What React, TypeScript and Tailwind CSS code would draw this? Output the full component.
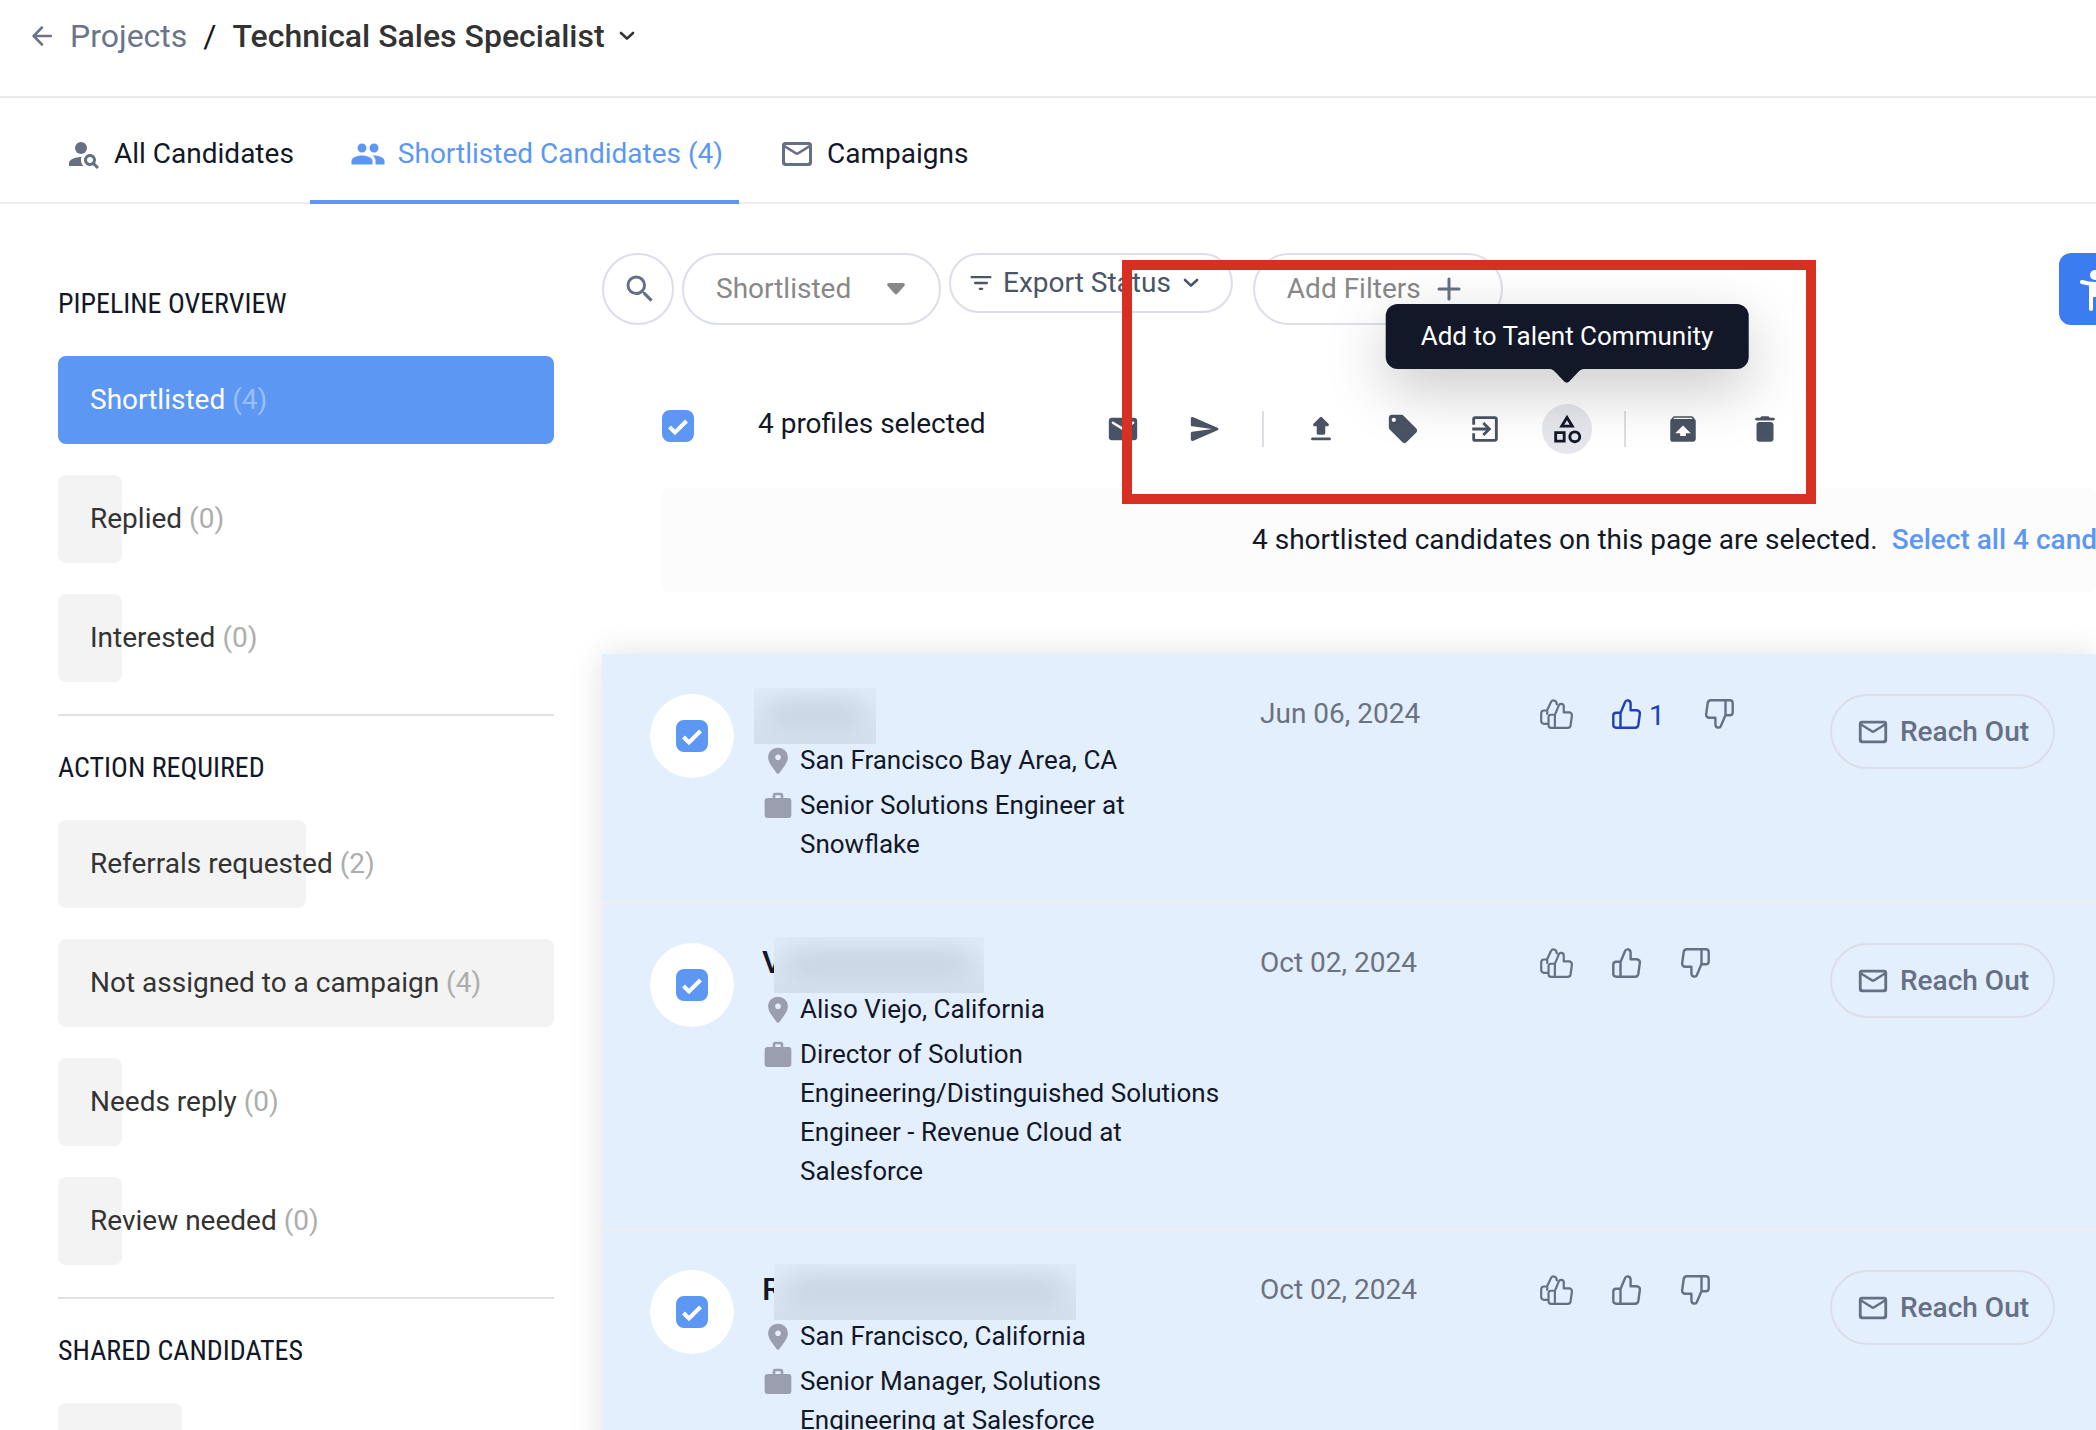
import { useState } from "react";
import type { ReactNode } from "react";
import {
  MdExitToApp,
  MdLocalOffer,
  MdOutlineCategory,
  MdPeople,
  MdPersonSearch,
  MdSearch,
  MdUnarchive,
} from "react-icons/md";

interface PipelineItem {
  label?: string;
  count: number;
  share: number;
}

interface PipelineSection {
  title: string;
  items: PipelineItem[];
}

interface Candidate {
  initial: string;
  maskClass: string;
  location: string;
  job: string;
  date: string;
  likes: number;
}

const sections: PipelineSection[] = [
  {
    title: "PIPELINE OVERVIEW",
    items: [
      { label: "Shortlisted", count: 4, share: 100 },
      { label: "Replied", count: 0, share: 0 },
      { label: "Interested", count: 0, share: 0 },
    ],
  },
  {
    title: "ACTION REQUIRED",
    items: [
      { label: "Referrals requested", count: 2, share: 50 },
      { label: "Not assigned to a campaign", count: 4, share: 100 },
      { label: "Needs reply", count: 0, share: 0 },
      { label: "Review needed", count: 0, share: 0 },
    ],
  },
  {
    title: "SHARED CANDIDATES",
    items: [{ count: 1, share: 25 }],
  },
];

const candidates: Candidate[] = [
  {
    initial: "",
    maskClass: "-left-2 w-[122px]",
    location: "San Francisco Bay Area, CA",
    job: "Senior Solutions Engineer at Snowflake",
    date: "Jun 06, 2024",
    likes: 1,
  },
  {
    initial: "V",
    maskClass: "left-3 w-[210px]",
    location: "Aliso Viejo, California",
    job: "Director of Solution Engineering/Distinguished Solutions Engineer - Revenue Cloud at Salesforce",
    date: "Oct 02, 2024",
    likes: 0,
  },
  {
    initial: "R",
    maskClass: "left-3 w-[302px]",
    location: "San Francisco, California",
    job: "Senior Manager, Solutions Engineering at Salesforce",
    date: "Oct 02, 2024",
    likes: 0,
  },
];

/* Icons */

const Icon = ({ d, className }: { d: string; className: string }) => (
  <svg viewBox="0 0 24 24" fill="currentColor" className={className} aria-hidden="true">
    <path d={d} />
  </svg>
);

const mailOutline =
  "M20 4H4c-1.1 0-2 .9-2 2v12c0 1.1.9 2 2 2h16c1.1 0 2-.9 2-2V6c0-1.1-.9-2-2-2zm-1 14H5c-.55 0-1-.45-1-1V8l6.94 4.34c.65.41 1.47.41 2.12 0L20 8v9c0 .55-.45 1-1 1zm-7-7L4 6h16l-8 5z";
const mail =
  "M20 4H4c-1.1 0-1.99.9-1.99 2L2 18c0 1.1.9 2 2 2h16c1.1 0 2-.9 2-2V6c0-1.1-.9-2-2-2zm-.4 4.25l-7.07 4.42c-.32.2-.74.2-1.06 0L4.4 8.25c-.25-.16-.4-.43-.4-.72 0-.67.73-1.07 1.3-.72L12 11l6.7-4.19c.57-.35 1.3.05 1.3.72 0 .29-.15.56-.4.72z";
const send =
  "M3.4 20.4l17.45-7.48c.81-.35.81-1.49 0-1.84L3.4 3.6c-.66-.29-1.39.2-1.39.91L2 9.12c0 .5.37.93.87.99L17 12 2.87 13.88c-.5.07-.87.5-.87 1l.01 4.61c0 .71.73 1.2 1.39.91z";
const upload =
  "M7.4 10h1.59v5c0 .55.45 1 1 1h4c.55 0 1-.45 1-1v-5h1.59c.89 0 1.34-1.08.71-1.71L12.7 3.7a.996.996 0 0 0-1.41 0L6.7 8.29c-.63.63-.19 1.71.7 1.71zM5 19c0 .55.45 1 1 1h12c.55 0 1-.45 1-1s-.45-1-1-1H6c-.55 0-1 .45-1 1z";
const trash =
  "M6 19c0 1.1.9 2 2 2h8c1.1 0 2-.9 2-2V9c0-1.1-.9-2-2-2H8c-1.1 0-2 .9-2 2v10zM18 4h-2.5l-.71-.71c-.18-.18-.44-.29-.7-.29H9.91c-.26 0-.52.11-.7.29L8.5 4H6c-.55 0-1 .45-1 1s.45 1 1 1h12c.55 0 1-.45 1-1s-.45-1-1-1z";
const place =
  "M12 2C7.8 2 4.6 5.2 4.6 9.2c0 4.5 4.1 8.3 6.3 11.8.5.8 1.7.8 2.2 0 2.2-3.5 6.3-7.3 6.3-11.8C19.4 5.2 16.2 2 12 2zm0 9.3a2.1 2.1 0 1 1 0-4.2 2.1 2.1 0 0 1 0 4.2z";
const briefcase =
  "M20 6h-4V4c0-1.11-.89-2-2-2h-4c-1.11 0-2 .89-2 2v2H4c-1.11 0-2 .89-2 2v11c0 1.11.89 2 2 2h16c1.11 0 2-.89 2-2V8c0-1.11-.89-2-2-2zm-6 0h-4V4h4v2z";
const filterList =
  "M11 18h2c.55 0 1-.45 1-1s-.45-1-1-1h-2c-.55 0-1 .45-1 1s.45 1 1 1zM3 7c0 .55.45 1 1 1h16c.55 0 1-.45 1-1s-.45-1-1-1H4c-.55 0-1 .45-1 1zm4 6h10c.55 0 1-.45 1-1s-.45-1-1-1H7c-.55 0-1 .45-1 1s.45 1 1 1z";

const Chevron = () => (
  <svg viewBox="0 0 16 10" fill="none" stroke="currentColor" strokeWidth={2.6} strokeLinecap="round" strokeLinejoin="round" className="h-[10px] w-4" aria-hidden="true">
    <path d="M2 2l6 5.6L14 2" />
  </svg>
);

const thumb =
  "M8.5 14 13 3.2C13.6 1.6 15 1.2 16.3 1.5 18 1.9 18.6 3.2 18.6 4.8V11.2H24.6C26.7 11.2 28.2 13 27.8 15.2L26.3 26C26 27.7 24.8 28.7 23.2 28.7H4.2C2.5 28.7 1.3 27.5 1.3 25.8V16.6C1.3 14.9 2.5 13.8 4.2 13.8H8.5V28.7";

const ThumbUp = ({ className = "" }: { className?: string }) => (
  <svg viewBox="0 0 29 30" fill="none" stroke="currentColor" strokeWidth={2.4} strokeLinejoin="round" className={`h-[30px] w-[29px] ${className}`} aria-hidden="true">
    <path d={thumb} />
  </svg>
);

const DoubleThumb = () => (
  <svg viewBox="0 0 34 30" fill="none" stroke="currentColor" strokeWidth={2.2} strokeLinejoin="round" strokeLinecap="round" className="h-[30px] w-[34px]" aria-hidden="true">
    <path d="M7.5 24.8H4C2.4 24.8 1.2 23.6 1.2 22V14.5C1.2 12.8 2.3 11.5 4 11.5H7L11 3C11.8 1.6 12.6 1.2 13.8 1.4 15.8 1.6 16.6 3 16.8 5.4M7.2 11.5V15" />
    <g transform="translate(7.4 3.6) scale(.88)" strokeWidth={2.5}>
      <path d={thumb} />
    </g>
  </svg>
);

/* Shared pieces */

const Checkbox = ({ label }: { label: string }) => (
  <span className="grid size-8 place-items-center">
    <input
      type="checkbox"
      defaultChecked
      aria-label={label}
      className="peer col-start-1 row-start-1 size-8 appearance-none rounded-lg border-2 border-[#5c97f4] bg-white checked:bg-[#5c97f4]"
    />
    <svg viewBox="0 0 32 32" fill="none" stroke="white" strokeWidth={4} className="pointer-events-none invisible col-start-1 row-start-1 size-8 peer-checked:visible" aria-hidden="true">
      <path d="M7.5 17l5.5 5.5L24.5 11" />
    </svg>
  </span>
);

const Tab = ({ icon, label, active = false }: { icon: ReactNode; label: string; active?: boolean }) => (
  <a
    href="#"
    aria-current={active ? "page" : undefined}
    className={`-mb-0.5 flex items-center gap-3 border-b-4 pt-2.5 pr-4 pl-10 ${
      active ? "border-[#5c97f4] text-[#5c97f4]" : "border-transparent"
    }`}
  >
    {icon}
    <span>{label}</span>
  </a>
);

const ToolButton = ({ label, children }: { label: string; children: ReactNode }) => (
  <button aria-label={label} className="flex size-[50px] items-center justify-center rounded-full text-[#4a5365]">
    {children}
  </button>
);

const Header = () => (
  <header className="flex h-[98px] shrink-0 items-start border-b-2 border-[#e9e9ee] pt-3 pl-8 text-[32px] leading-12">
    <a href="#" className="flex items-center gap-[18px] text-[#6b7489]">
      <svg viewBox="0 0 20 20" fill="none" stroke="currentColor" strokeWidth={2.5} strokeLinecap="round" strokeLinejoin="round" className="size-5" aria-hidden="true">
        <path d="M19 10H2M10 1.5L1.6 10l8.4 8.5" />
      </svg>
      Projects
    </a>
    <span className="px-4">/</span>
    <button className="flex items-center gap-3.5 font-medium text-[#333333]">
      Technical Sales Specialist
      <Chevron />
    </button>
  </header>
);

const Sidebar = ({ selected, onSelect }: { selected: string; onSelect: (label: string) => void }) => (
  <aside className="w-[496px] shrink-0 pt-12">
    {sections.map((section) => (
      <section key={section.title} className="border-b-2 border-[#dfdfe4] pt-[31px] pb-8 last:border-0">
        <h2 className="mb-[31px] font-['Roboto_Condensed',Roboto,sans-serif] leading-[42px]">{section.title}</h2>
        <div className="flex flex-col gap-[31px]">
          {section.items.map((item, index) => {
            const active = item.label === selected;
            return (
              <button
                key={index}
                onClick={() => item.label && onSelect(item.label)}
                className={`grid h-[88px] w-full items-center text-left ${active ? "text-white" : "text-[#333333]"}`}
              >
                <span
                  className={`col-start-1 row-start-1 h-full min-w-16 rounded-lg ${active ? "bg-[#5c97f4]" : "bg-[#f3f3f3]"}`}
                  style={{ width: `${item.share}%` }}
                />
                {item.label && (
                  <span className="col-start-1 row-start-1 px-8">
                    {item.label} <span className={active ? "text-white/40" : "text-[#adadad]"}>({item.count})</span>
                  </span>
                )}
              </button>
            );
          })}
        </div>
      </section>
    ))}
  </aside>
);

const FilterBar = () => (
  <div className="flex items-start">
    <button aria-label="Search" className="flex size-[72px] items-center justify-center rounded-full border-2 border-[#dcdee9] pl-1 text-[#667085]">
      <MdSearch className="size-9" />
    </button>
    <div className="ml-2 grid w-[259px] items-center">
      <select
        aria-label="Stage"
        className="col-start-1 row-start-1 h-[72px] appearance-none rounded-full border-2 border-[#dcdee9] pl-8 text-[#888888]"
      >
        <option>Shortlisted</option>
        <option>Replied</option>
        <option>Interested</option>
      </select>
      <svg viewBox="0 0 18 12" className="pointer-events-none col-start-1 row-start-1 mr-9 h-3 w-[18px] justify-self-end fill-[#888888]" aria-hidden="true">
        <path d="M2 0h14c1.700 0 2.400 1.700 1.300 2.900l-7 7.800c-.7.800-1.900.800-2.600 0l-7-7.800C-.4 1.700.3 0 2 0z" />
      </svg>
    </div>
    <button className="ml-2 flex h-[60px] items-center gap-2 rounded-full border-2 border-[#dcdee9] pr-8 pl-4 text-[#4a5568]">
      <Icon d={filterList} className="size-7" />
      Export Status
      <span className="pl-1">
        <Chevron />
      </span>
    </button>
    <button className="ml-5 flex h-[72px] items-center gap-4 rounded-full border-2 border-[#dcdee9] pr-10 pl-8 text-[#888888]">
      Add Filters
      <svg viewBox="0 0 24 24" fill="none" stroke="#667085" strokeWidth={3} strokeLinecap="round" className="size-6" aria-hidden="true">
        <path d="M12 2v20M2 12h20" />
      </svg>
    </button>
    <button aria-label="Accessibility" className="-mr-[35px] ml-auto flex size-[72px] items-center justify-center rounded-xl bg-[#3b7df0]">
      <svg viewBox="0 0 40 48" fill="none" stroke="white" strokeWidth={4} strokeLinecap="round" strokeLinejoin="round" className="h-12 w-10" aria-hidden="true">
        <circle cx="20" cy="10" r="5" fill="white" stroke="none" />
        <path d="M7 17c8 2.500 18 2.500 26 0M16 20v24M24 20v24" />
        <path d="M16 19h8v13h-8z" fill="white" stroke="none" />
      </svg>
    </button>
  </div>
);

const Divider = () => <span className="h-9 w-0.5 bg-[#dcdde5]" />;

const SelectionBar = () => (
  <div className="relative mt-[73px] flex items-center pl-[60px]">
    <Checkbox label="Select all profiles" />
    <span className="ml-16 w-[340px] pb-1">4 profiles selected</span>
    <div className="flex shrink-0 items-center gap-8 pt-1.5">
      <ToolButton label="Email">
        <Icon d={mail} className="size-[34px]" />
      </ToolButton>
      <ToolButton label="Send">
        <Icon d={send} className="size-[34px]" />
      </ToolButton>
      <Divider />
      <ToolButton label="Export">
        <Icon d={upload} className="size-[34px]" />
      </ToolButton>
      <ToolButton label="Tag">
        <MdLocalOffer className="size-[34px]" />
      </ToolButton>
      <ToolButton label="Move">
        <MdExitToApp className="size-[34px]" />
      </ToolButton>
      <div className="relative">
        <button aria-describedby="community-tip" aria-label="Community" className="flex size-[50px] items-center justify-center rounded-full bg-[#e6e7ec] text-[#121827]">
          <MdOutlineCategory className="size-[34px]" />
        </button>
        <div
          id="community-tip"
          role="tooltip"
          className="absolute bottom-full left-1/2 z-10 mb-[35px] -translate-x-1/2 rounded-xl bg-[#121827] px-[35px] py-3 text-[26px] leading-[41px] whitespace-nowrap text-white shadow-[0_20px_60px_rgba(0,0,0,0.22)]"
        >
          Add to Talent Community
          <svg viewBox="0 0 34 14" className="absolute top-full left-1/2 h-3.5 w-[34px] -translate-x-1/2 fill-[#121827]" aria-hidden="true">
            <path d="M0 0h34c-2 0-3.500 1-5 2.500l-9.500 10c-1.400 1.500-3.600 1.500-5 0L5 2.500C3.500 1 2 0 0 0z" />
          </svg>
        </div>
      </div>
      <Divider />
      <ToolButton label="Archive">
        <MdUnarchive className="size-[34px]" />
      </ToolButton>
      <ToolButton label="Delete">
        <Icon d={trash} className="size-[34px]" />
      </ToolButton>
    </div>
    {/* Highlight frame around the bulk actions */}
    <div className="pointer-events-none absolute -top-[138px] left-[520px] z-20 h-[244px] w-[694px] border-10 border-[#d73022]" />
  </div>
);

const CandidateRow = ({ candidate }: { candidate: Candidate }) => (
  <li className="grid grid-cols-[112px_498px_280px_290px_1fr] border-b-2 border-[#efeff1] bg-[#e3effd] pt-10 pb-[37px] pl-12">
    <div className="flex size-[84px] items-center justify-center rounded-full bg-white">
      <Checkbox label={`Select candidate in ${candidate.location}`} />
    </div>
    <div className="text-[26px] leading-[39px]">
      <h3 className="relative mb-[9px] h-[38px] text-[32px] leading-[38px] font-medium">
        {candidate.initial}
        <span className={`absolute -top-1.5 h-14 overflow-hidden bg-linear-to-b from-[#dfebf9] to-[#d3dfec] ${candidate.maskClass}`}>
          <span className="mx-3 mt-3 block h-7 rounded-full bg-[#bcc8d4] opacity-60 blur-[12px]" />
        </span>
      </h3>
      <p className="mb-1.5 flex gap-1.5">
        <Icon d={place} className="mt-1 size-8 shrink-0 text-[#9a9eae]" />
        {candidate.location}
      </p>
      <p className="flex gap-1.5">
        <Icon d={briefcase} className="mt-1 size-8 shrink-0 text-[#9a9eae]" />
        <span className="w-[430px]">{candidate.job}</span>
      </p>
    </div>
    <time className="leading-10 text-[#6b7280]">{candidate.date}</time>
    <div className="flex h-10 items-center text-[#667085]">
      <button aria-label="Strong yes">
        <DoubleThumb />
      </button>
      <button aria-label="Yes" className={`ml-[38px] flex items-center gap-2 ${candidate.likes ? "text-[#1e40b8]" : ""}`}>
        <ThumbUp />
        {candidate.likes > 0 && <span className="pt-1 leading-9">{candidate.likes}</span>}
      </button>
      <button aria-label="No" className="ml-10">
        <ThumbUp className="rotate-180" />
      </button>
    </div>
    <div>
      <button className="flex h-[75px] items-center gap-2.5 rounded-full border-2 border-[#dcdde8] px-6 font-medium whitespace-nowrap text-[#667085]">
        <Icon d={mailOutline} className="size-[34px]" />
        Reach Out
      </button>
    </div>
  </li>
);

const App = () => {
  const [selected, setSelected] = useState("Shortlisted");

  return (
    <div className="flex h-screen flex-col overflow-hidden bg-white font-[Roboto,sans-serif] text-[28px] leading-[42px] text-[#121827]">
      <Header />
      <nav className="flex h-[106px] shrink-0 border-b-2 border-[#eeeeee] pl-[26px]">
        <Tab icon={<MdPersonSearch className="size-9 text-[#667085]" />} label="All Candidates" />
        <Tab icon={<MdPeople className="size-9" />} label="Shortlisted Candidates (4)" active />
        <Tab icon={<Icon d={mailOutline} className="size-9 text-[#667085]" />} label="Campaigns" />
      </nav>
      <div className="flex min-h-0 flex-1 gap-12 pl-[58px]">
        <Sidebar selected={selected} onSelect={setSelected} />
        <main className="min-w-0 flex-1 pt-[49px]">
          <FilterBar />
          <SelectionBar />
          <div className="mt-[34px] ml-[60px] overflow-hidden rounded-lg bg-[#fcfcfc] py-[31px] pl-[590px] whitespace-nowrap">
            4 shortlisted candidates on this page are selected.
            <a href="#" className="ml-3.5 font-medium text-[#5c97f4]">
              Select all 4 candidates
            </a>
          </div>
          <ul className="mt-[62px] shadow-[0_0_32px_rgba(0,0,0,0.12)]">
            {candidates.map((candidate) => (
              <CandidateRow key={candidate.location} candidate={candidate} />
            ))}
          </ul>
        </main>
      </div>
    </div>
  );
};

export default App;
